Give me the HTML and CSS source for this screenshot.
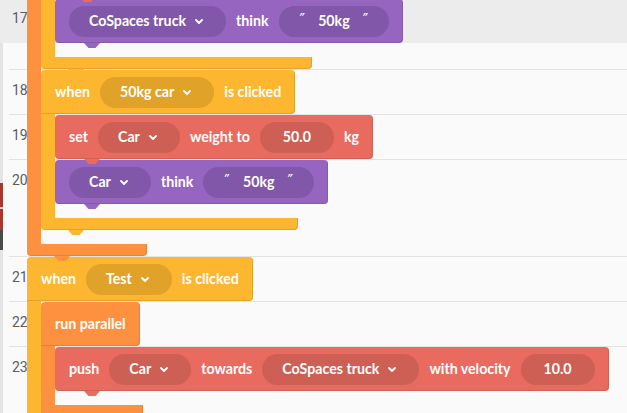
FILE: index.html
```html
<!DOCTYPE html>
<html>
<head>
<meta charset="utf-8">
<link rel="stylesheet" href="styles.css">
</head>
<body>
<div class="app">
  <div class="edge">
    <div class="seg seg-top"></div>
    <div class="seg seg-mid"></div>
    <div class="seg seg-red"></div>
    <div class="seg seg-pink"></div>
    <div class="seg seg-red2"></div>
    <div class="seg seg-dark"></div>
    <div class="seg seg-rest"></div>
  </div>
  <div class="editor">
    <div class="lines">
      <div class="line line-active"><span class="num">17</span></div>
      <div class="line line-close"></div>
      <div class="line"><span class="num">18</span></div>
      <div class="line"><span class="num">19</span></div>
      <div class="line line-tall"><span class="num">20</span></div>
      <div class="line"><span class="num">21</span></div>
      <div class="line"><span class="num">22</span></div>
      <div class="line line-last"><span class="num">23</span></div>
    </div>

    <div class="script">
      <!-- outer run parallel (header scrolled out of view) -->
      <div class="c">
        <div class="mouth">
          <div class="bar orange"></div>
          <div class="body">
            <!-- hat whose header is scrolled out of view -->
            <div class="c">
              <div class="mouth">
                <div class="bar yellow"></div>
                <div class="body">
                  <div class="block purple notch top-bump">
                    <span class="pill">CoSpaces truck <svg class="chev" viewBox="0 0 8 5" width="8" height="5"><path d="M1 1l3 3 3-3"/></svg></span>
                    <span>think</span>
                    <span class="pill quote"><span class="q">″</span><span>50kg</span><span class="q">″</span></span>
                  </div>
                </div>
              </div>
              <div class="arm yellow notch arm-17"></div>
            </div>

            <!-- when 50kg car is clicked -->
            <div class="c">
              <div class="block head yellow">
                <span>when</span>
                <span class="pill">50kg car <svg class="chev" viewBox="0 0 8 5" width="8" height="5"><path d="M1 1l3 3 3-3"/></svg></span>
                <span>is clicked</span>
              </div>
              <div class="mouth">
                <div class="bar yellow"></div>
                <div class="body">
                  <div class="block red notch">
                    <span>set</span>
                    <span class="pill">Car <svg class="chev" viewBox="0 0 8 5" width="8" height="5"><path d="M1 1l3 3 3-3"/></svg></span>
                    <span>weight to</span>
                    <span class="pill val">50.0</span>
                    <span>kg</span>
                  </div>
                  <div class="block purple notch">
                    <span class="pill">Car <svg class="chev" viewBox="0 0 8 5" width="8" height="5"><path d="M1 1l3 3 3-3"/></svg></span>
                    <span>think</span>
                    <span class="pill quote"><span class="q">″</span><span>50kg</span><span class="q">″</span></span>
                  </div>
                </div>
              </div>
              <div class="arm yellow notch arm-18"></div>
            </div>
          </div>
        </div>
        <div class="arm orange notch arm-outer"></div>
      </div>

      <!-- when Test is clicked -->
      <div class="c">
        <div class="block head yellow">
          <span>when</span>
          <span class="pill">Test <svg class="chev" viewBox="0 0 8 5" width="8" height="5"><path d="M1 1l3 3 3-3"/></svg></span>
          <span>is clicked</span>
        </div>
        <div class="mouth">
          <div class="bar yellow"></div>
          <div class="body">
            <div class="c">
              <div class="block head orange">
                <span>run parallel</span>
              </div>
              <div class="mouth">
                <div class="bar orange"></div>
                <div class="body">
                  <div class="block red notch">
                    <span>push</span>
                    <span class="pill">Car <svg class="chev" viewBox="0 0 8 5" width="8" height="5"><path d="M1 1l3 3 3-3"/></svg></span>
                    <span>towards</span>
                    <span class="pill">CoSpaces truck <svg class="chev" viewBox="0 0 8 5" width="8" height="5"><path d="M1 1l3 3 3-3"/></svg></span>
                    <span>with velocity</span>
                    <span class="pill val">10.0</span>
                  </div>
                </div>
              </div>
              <div class="arm orange notch arm-par"></div>
            </div>
          </div>
        </div>
      </div>
    </div>
  </div>
</div>
</body>
</html>
```
FILE: styles.css
```css
html, body {
  margin: 0;
  padding: 0;
  background: #fafafa;
  overflow: hidden;
}

.app {
  display: flex;
  width: 627px;
  height: 413px;
  overflow: hidden;
}

/* left edge strip */
.edge {
  width: 3px;
  flex: none;
  display: flex;
  flex-direction: column;
}
.seg-top { height: 43px; background: #ececec; }
.seg-mid { height: 140px; background: #e4e4e4; }
.seg-red { height: 24px; background: #a8372d; }
.seg-pink { height: 2px; background: #e7c9c5; }
.seg-red2 { height: 21px; background: #a8372d; }
.seg-dark { height: 20px; background: #4b4b4b; }
.seg-rest { flex: 1; background: #e4e4e4; }

.editor {
  flex: 1;
  position: relative;
}

/* code lines */
.lines {
  display: flex;
  flex-direction: column;
  margin-top: -2px;
}
.line {
  height: 45px;
  box-sizing: border-box;
  padding-left: 9px;
  background: linear-gradient(#e3e3e3, #e3e3e3) no-repeat 6px 100% / 100% 1px;
  flex: none;
}
.line-active {
  background: #ececec;
}
.line-close { height: 27px; }
.line-tall { height: 97px; }
.line-last { height: 80px; }
.num {
  display: block;
  padding-top: 12px;
  font: 400 14px/16px Roboto, "Open Sans", sans-serif;
  color: #5c5c5c;
}

/* script blocks */
.script {
  position: absolute;
  top: -3px;
  left: 24px;
  display: flex;
  flex-direction: column;
  align-items: flex-start;
  gap: 1px;
  font: 700 14.2px/1 Lato, "Open Sans", sans-serif;
  color: #fff;
}

.c {
  display: flex;
  flex-direction: column;
  align-items: flex-start;
}
.mouth {
  display: flex;
  align-self: stretch;
}
.bar {
  width: 14px;
  flex: none;
}
.body {
  display: flex;
  flex-direction: column;
  align-items: flex-start;
  gap: 1px;
  padding: 1px 0 14px;
}

.yellow { background: #fdb62f; }
.orange { background: #fd913f; }
.red { background: #e96b5f; }
.purple { background: #9565bf; }

.block {
  height: 44px;
  box-sizing: border-box;
  display: flex;
  align-items: center;
  gap: 10px;
  padding: 0 14px;
  border-radius: 4px;
  position: relative;
  white-space: nowrap;
  box-shadow: inset -1px -1px 0 rgba(0, 0, 0, 0.1);
}
.block.head {
  border-radius: 4px 4px 4px 0;
}

.arm {
  height: 12px;
  border-radius: 0 0 4px 4px;
  position: relative;
  box-shadow: inset -1px -1px 0 rgba(0, 0, 0, 0.1);
}
.arm-17 { width: 271px; }
.arm-18 { width: 257px; }
.arm-outer { width: 120px; }
.arm-par { width: 102px; }

/* connector bumps */
.notch::after {
  content: "";
  position: absolute;
  left: 29px;
  bottom: -5px;
  width: 16px;
  height: 5px;
  background: inherit;
  clip-path: polygon(0 0, 100% 0, 72% 100%, 28% 100%);
  z-index: 2;
}
.arm.notch::after { left: 27px; }
.top-bump::before {
  content: "";
  position: absolute;
  left: 26px;
  top: 0;
  width: 13px;
  height: 3px;
  background: #e96b5f;
  clip-path: polygon(0 0, 100% 0, 75% 100%, 25% 100%);
}

.pill {
  height: 31px;
  box-sizing: border-box;
  border-radius: 16px;
  display: flex;
  align-items: center;
  gap: 9px;
  padding: 0 23px 0 20px;
  margin-top: 1px;
}
.pill.val { padding: 0 23px; }
.pill.quote { padding: 0 21px; gap: 13px; }
.q {
  font: 400 15px/1 "DejaVu Sans", sans-serif;
  margin-top: -3px;
}

.yellow > .pill { background: #e1a229; }
.red > .pill { background: #cd5f54; }
.purple > .pill { background: #8157a9; }

.chev {
  display: block;
  fill: none;
  stroke: #fff;
  stroke-width: 1.8;
  stroke-linecap: round;
  stroke-linejoin: round;
}
```
